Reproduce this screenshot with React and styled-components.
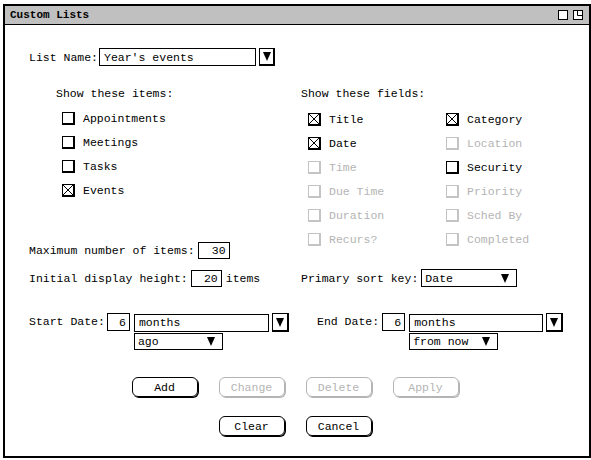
import React from "react";
import styled, { createGlobalStyle } from "styled-components";

const MONO = `"Liberation Mono", "DejaVu Sans Mono", monospace`;
const GREY = "#b4b4b4";

const GlobalStyle = createGlobalStyle`
  body {
    margin: 0;
    background: #fff;
    font-family: ${MONO};
    font-size: 11.5px;
    color: #000;
  }
`;

const Page = styled.div`
  padding: 4px 0 0 3px;
`;

const Window = styled.div`
  width: 588px;
  height: 454px;
  box-sizing: border-box;
  border: 2px solid #000;
  display: flex;
  flex-direction: column;
`;

const TitleBar = styled.div`
  height: 18px;
  background: #c0c0c0;
  border-bottom: 1px solid #000;
  display: flex;
  align-items: center;
  justify-content: space-between;
  padding: 0 6px 0 5px;
`;

const TitleText = styled.span`
  font-weight: bold;
  font-size: 11px;
`;

const TitleIcons = styled.div`
  display: flex;
  gap: 5px;
`;

const Body = styled.div`
  padding: 23px 0 0 24px;
`;

const Row = styled.div`
  display: flex;
  align-items: center;
  height: ${(p) => p.h || 18}px;
  margin-top: ${(p) => p.mt || 0}px;
`;

const Label = styled.span`
  margin-right: ${(p) => (p.gap !== undefined ? p.gap : 2)}px;
  white-space: pre;
  color: ${(p) => (p.disabled ? GREY : "#000")};
  margin-left: ${(p) => p.ml || 0}px;
`;

const Field = styled.div`
  width: ${(p) => p.w}px;
  height: ${(p) => p.h || 18}px;
  box-sizing: border-box;
  border: 1px solid #000;
  background: #fff;
  display: flex;
  align-items: center;
  justify-content: ${(p) => (p.right ? "flex-end" : "flex-start")};
  padding: 0 3px 0 4px;
  margin-left: ${(p) => p.ml || 0}px;
  white-space: pre;
`;

const Triangle = styled.span`
  width: 0;
  height: 0;
  border-left: 4px solid transparent;
  border-right: 4px solid transparent;
  border-top: 9px solid #000;
`;

const DropButton = styled.div`
  width: ${(p) => p.w || 16}px;
  height: ${(p) => p.h || 18}px;
  box-sizing: border-box;
  border: 1px solid #000;
  border-right-width: 2px;
  border-bottom-width: 2px;
  margin-left: 3px;
  display: flex;
  align-items: center;
  justify-content: center;
`;

const Select = styled.div`
  width: ${(p) => p.w}px;
  height: ${(p) => p.h || 17}px;
  box-sizing: border-box;
  border: 1px solid #000;
  display: flex;
  align-items: center;
  justify-content: space-between;
  padding: 0 7px 0 3px;
  margin-top: ${(p) => p.mt || 0}px;
`;

const Grid = styled.div`
  display: grid;
  grid-template-columns: 272px 1fr;
  align-items: start;
  margin-top: ${(p) => p.mt || 0}px;
`;

const Column = styled.div`
  display: flex;
  flex-direction: column;
  padding-left: ${(p) => p.pl || 0}px;
`;

const Heading = styled.div`
  line-height: 16px;
  height: 16px;
  padding-left: ${(p) => p.pl || 0}px;
`;

const CheckList = styled.div`
  margin-top: ${(p) => p.mt || 4}px;
  padding-left: ${(p) => p.pl}px;
  display: grid;
  grid-template-columns: ${(p) => (p.cols === 2 ? "138px 1fr" : "1fr")};
  grid-auto-flow: ${(p) => (p.cols === 2 ? "column" : "row")};
  grid-template-rows: ${(p) => (p.cols === 2 ? "repeat(6, 24px)" : "none")};
`;

const CheckRow = styled.div`
  display: flex;
  align-items: center;
  height: 24px;
  color: ${(p) => (p.disabled ? GREY : "#000")};
`;

const Box = styled.span`
  width: 13px;
  height: 13px;
  box-sizing: border-box;
  border: 1px solid ${(p) => (p.disabled ? "#c4c4c4" : "#000")};
  border-right-width: 2px;
  border-bottom-width: 2px;
  margin-right: 8px;
  display: flex;
  svg {
    display: block;
  }
`;

const StartBlock = styled.div`
  display: flex;
  align-items: flex-start;
  padding-left: ${(p) => p.pl || 0}px;
`;

const DateLabel = styled.span`
  line-height: 18px;
  margin-right: 2px;
  white-space: pre;
`;

const Stack = styled.div`
  display: flex;
  flex-direction: column;
  margin-left: 4px;
`;

const ButtonRow = styled.div`
  display: flex;
  justify-content: center;
  gap: 21px;
  margin-top: ${(p) => p.mt}px;
  padding-right: 28px;
`;

const Button = styled.div`
  width: 66px;
  height: 20px;
  box-sizing: border-box;
  border: 1px solid ${(p) => (p.disabled ? GREY : "#000")};
  border-radius: 6px;
  box-shadow: 1px 1px 0 ${(p) => (p.disabled ? GREY : "#000")};
  color: ${(p) => (p.disabled ? GREY : "#000")};
  display: flex;
  align-items: center;
  justify-content: center;
`;

function Check({ checked, disabled, children }) {
  return (
    <CheckRow disabled={disabled}>
      <Box disabled={disabled}>
        {checked && (
          <svg width="10" height="10" viewBox="0 0 10 10">
            <path d="M0 0 L10 10 M10 0 L0 10" stroke="#000" strokeWidth="1" />
          </svg>
        )}
      </Box>
      {children}
    </CheckRow>
  );
}

function WinIcon({ restore }) {
  return (
    <svg width="10" height="10" viewBox="0 0 10 10">
      <rect x="0.5" y="0.5" width="9" height="9" fill="#fff" stroke="#000" />
      {restore && <path d="M4.5 0.5 V5.5 H9.5" fill="none" stroke="#000" />}
    </svg>
  );
}

const fields = [
  ["Title", true, false],
  ["Date", true, false],
  ["Time", false, true],
  ["Due Time", false, true],
  ["Duration", false, true],
  ["Recurs?", false, true],
  ["Category", true, false],
  ["Location", false, true],
  ["Security", false, false],
  ["Priority", false, true],
  ["Sched By", false, true],
  ["Completed", false, true],
];

export default function App() {
  return (
    <Page>
      <GlobalStyle />
      <Window>
        <TitleBar>
          <TitleText>Custom Lists</TitleText>
          <TitleIcons>
            <WinIcon />
            <WinIcon restore />
          </TitleIcons>
        </TitleBar>
        <Body>
          <Row>
            <Label gap={1}>List Name:</Label>
            <Field w={157}>Year's events</Field>
            <DropButton>
              <Triangle />
            </DropButton>
          </Row>

          <Grid mt={20}>
            <Column>
              <Heading pl={27}>Show these items:</Heading>
              <CheckList pl={33}>
                <Check>Appointments</Check>
                <Check>Meetings</Check>
                <Check>Tasks</Check>
                <Check checked>Events</Check>
              </CheckList>
              <Row mt={40} h={17}>
                <Label gap={3}>Maximum number of items:</Label>
                <Field w={32} h={17} right>
                  30
                </Field>
              </Row>
            </Column>
            <Column>
              <Heading>Show these fields:</Heading>
              <CheckList pl={7} cols={2} mt={5}>
                {fields.map(([name, checked, disabled]) => (
                  <Check key={name} checked={checked} disabled={disabled}>
                    {name}
                  </Check>
                ))}
              </CheckList>
            </Column>
          </Grid>

          <Grid mt={10}>
            <Row>
              <Label gap={3}>Initial display height:</Label>
              <Field w={31} h={17} right>
                20
              </Field>
              <Label ml={4}>items</Label>
            </Row>
            <Row>
              <Label gap={3}>Primary sort key:</Label>
              <Select w={96} h={18}>
                <span>Date</span>
                <Triangle />
              </Select>
            </Row>
          </Grid>

          <Grid mt={26}>
            <StartBlock>
              <DateLabel>Start Date:</DateLabel>
              <Field w={23} right>
                6
              </Field>
              <Stack>
                <Row h={19}>
                  <Field w={135}>months</Field>
                  <DropButton w={17} h={19}>
                    <Triangle />
                  </DropButton>
                </Row>
                <Select w={89} mt={1}>
                  <span>ago</span>
                  <Triangle />
                </Select>
              </Stack>
            </StartBlock>
            <StartBlock pl={16}>
              <DateLabel>End Date:</DateLabel>
              <Field w={23} ml={1} right>
                6
              </Field>
              <Stack>
                <Row h={19}>
                  <Field w={134}>months</Field>
                  <DropButton w={17} h={19}>
                    <Triangle />
                  </DropButton>
                </Row>
                <Select w={89} mt={1}>
                  <span>from now</span>
                  <Triangle />
                </Select>
              </Stack>
            </StartBlock>
          </Grid>

          <ButtonRow mt={27}>
            <Button>Add</Button>
            <Button disabled>Change</Button>
            <Button disabled>Delete</Button>
            <Button disabled>Apply</Button>
          </ButtonRow>
          <ButtonRow mt={19}>
            <Button>Clear</Button>
            <Button>Cancel</Button>
          </ButtonRow>
        </Body>
      </Window>
    </Page>
  );
}
